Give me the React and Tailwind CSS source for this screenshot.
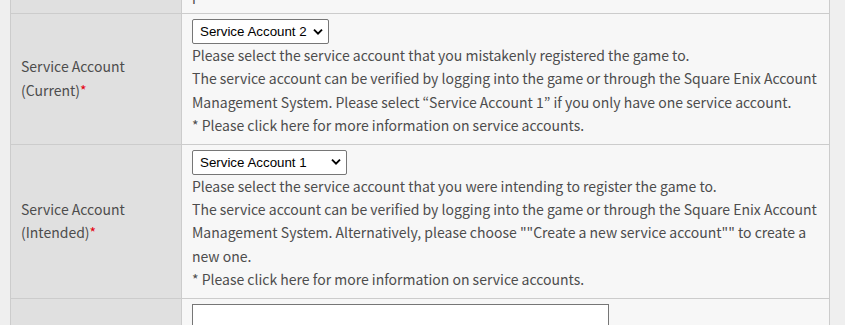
import React from "react";

const Chevron = () => (
  <svg width="10" height="7" viewBox="0 0 10 7" className="pointer-events-none absolute right-[6px] top-1/2 -translate-y-1/2">
    <path d="M1 1.2 L5 5.2 L9 1.2" fill="none" stroke="#000" strokeWidth="1.9" strokeLinejoin="miter" />
  </svg>
);

const Select = ({ value, w }) => (
  <div className={`relative ${w}`}>
    <select
      defaultValue={value}
      className="h-[25px] w-full appearance-none rounded-[2px] border border-[#767676] bg-white pl-[7px] pr-[2px] text-[13.33px] text-black outline-none"
      style={{ fontFamily: '"Liberation Sans", Arial, sans-serif' }}
    >
      <option>Service Account 1</option>
      <option>Service Account 2</option>
    </select>
    <Chevron />
  </div>
);

const font = { fontFamily: '"Noto Sans CJK JP", "Noto Sans", sans-serif' };

const Label = ({ top, bottom }) => (
  <div className="flex w-[171px] shrink-0 flex-col justify-center border-r border-[#cccccc] bg-[#e0e0e0] pl-[10px] text-[14px] leading-[23.4px] text-[#4d4d4d]">
    <div>{top}</div>
    <div>
      {bottom}
      <span className="text-[#e60012]">*</span>
    </div>
  </div>
);

export default function App() {
  return (
    <div className="h-[325px] w-[845px] overflow-hidden bg-[#efefef] pl-[10px]" style={font}>
      <div className="w-[820px] border-l border-r border-[#cccccc] text-[14px] leading-[23.4px] text-[#4d4d4d]">
        <div className="flex h-[14px] border-b border-[#cccccc]">
          <div className="w-[171px] shrink-0 border-r border-[#cccccc] bg-[#e0e0e0]" />
          <div className="flex flex-1 flex-col justify-end overflow-hidden bg-[#f7f7f7] pb-[7px] pl-[10px]">
            <div className="leading-[23.4px]">p</div>
          </div>
        </div>

        <div className="flex border-b border-[#cccccc]">
          <Label top="Service Account" bottom="(Current)" />
          <div className="flex-1 bg-[#f7f7f7] pb-[6px] pl-[10px] pr-3 pt-[5px]">
            <Select value="Service Account 2" w="w-[137px]" />
            <p>Please select the service account that you mistakenly registered the game to.</p>
            <p>
              The service account can be verified by logging into the game or through the Square Enix Account
              Management System. Please select “Service Account 1” if you only have one service account.
            </p>
            <p>* Please click here for more information on service accounts.</p>
          </div>
        </div>

        <div className="flex border-b border-[#cccccc]">
          <Label top="Service Account" bottom="(Intended)" />
          <div className="flex-1 bg-[#f7f7f7] pb-[6px] pl-[10px] pr-3 pt-[5px]">
            <Select value="Service Account 1" w="w-[155px]" />
            <p>Please select the service account that you were intending to register the game to.</p>
            <p>
              The service account can be verified by logging into the game or through the Square Enix Account
              Management System. Alternatively, please choose ""Create a new service account"" to create a new
              one.
            </p>
            <p>* Please click here for more information on service accounts.</p>
          </div>
        </div>

        <div className="flex h-[40px]">
          <div className="w-[171px] shrink-0 border-r border-[#cccccc] bg-[#e0e0e0]" />
          <div className="flex-1 bg-[#f7f7f7] pl-[10px] pt-[5px]">
            <input type="text" className="h-[30px] w-[417px] border border-[#767676] bg-white outline-none" />
          </div>
        </div>
      </div>
    </div>
  );
}
